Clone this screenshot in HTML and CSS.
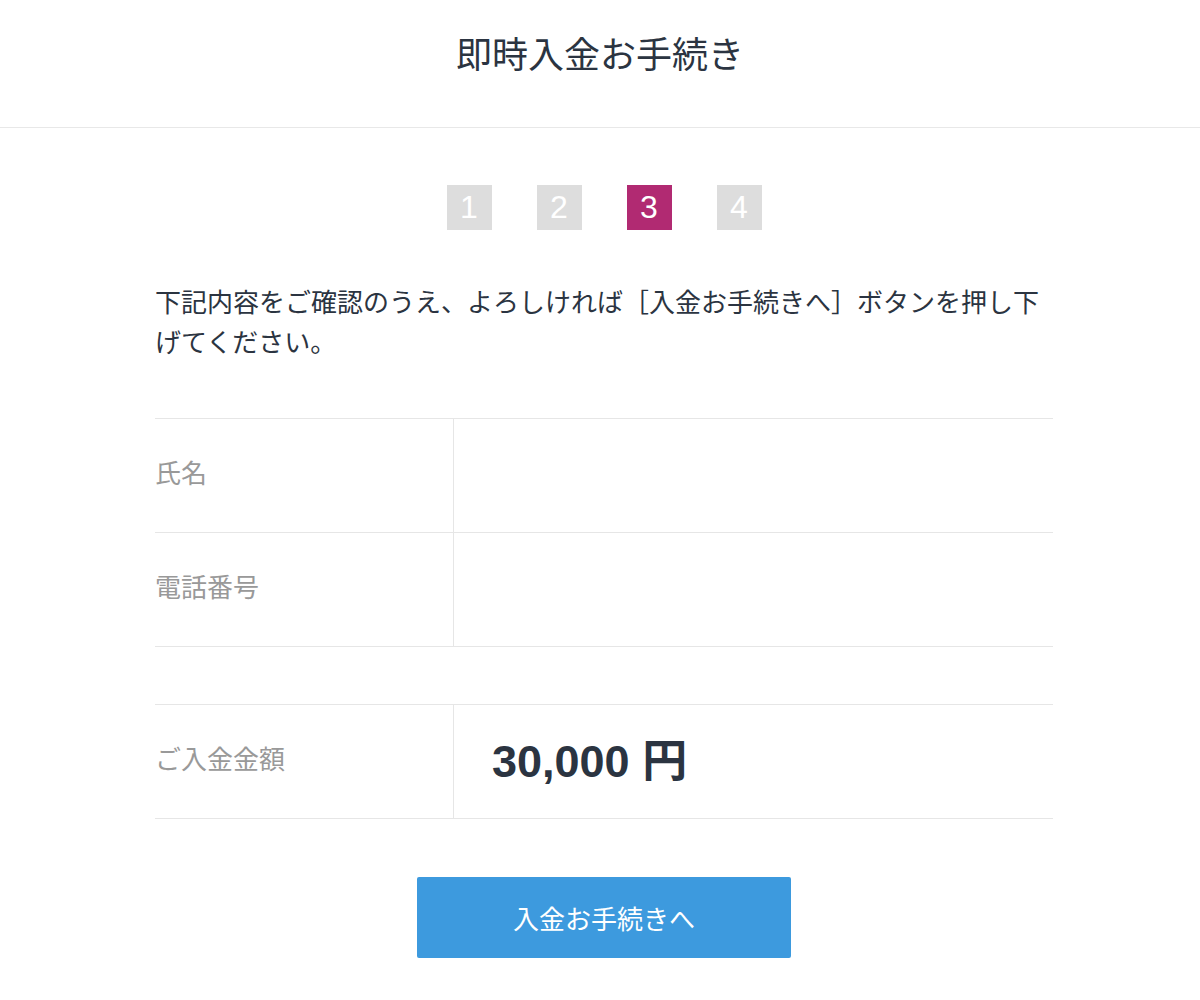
FILE: index.html
```html
<!DOCTYPE html>
<html lang="ja">
<head>
    <meta charset="UTF-8">
    <meta name="viewport" content="width=device-width, initial-scale=1.0">
    <title>即時入金お手続き</title>
    <link rel="stylesheet" href="styles.css">
</head>
<body>

    <header class="page-header">
        <h1>即時入金お手続き</h1>
    </header>

    <main class="wrap">
        <div class="container">
            <ol class="steps">
                <li class="step">1</li>
                <li class="step">2</li>
                <li class="step active">3</li>
                <li class="step">4</li>
            </ol>

            <p class="lead">下記内容をご確認のうえ、よろしければ［入金お手続きへ］ボタンを押し下げてください。</p>

            <table class="info">
                <tr>
                    <th>氏名</th>
                    <td></td>
                </tr>
                <tr>
                    <th>電話番号</th>
                    <td></td>
                </tr>
            </table>

            <table class="info amount-table">
                <tr>
                    <th>ご入金金額</th>
                    <td><span class="amount">30,000 円</span></td>
                </tr>
            </table>

            <div class="actions">
                <button type="button" class="submit">入金お手続きへ</button>
            </div>
        </div>
    </main>

</body>
</html>
```

FILE: styles.css
```css
body {
    margin: 0;
    font-family: "Noto Sans CJK JP", "Noto Sans", sans-serif;
    color: #2b3441;
    background-color: #fff;
}

.page-header {
    padding: 28px 0 51px;
    border-bottom: 1px solid #e8e8e8;
    text-align: center;
}

.page-header h1 {
    margin: 0;
    font-size: 36px;
    line-height: 48px;
    font-weight: 400;
    color: #2b3441;
}

.wrap {
    padding-left: 8px;
}

.container {
    width: 898px;
    margin: 0 auto;
}

.steps {
    display: flex;
    justify-content: center;
    gap: 45px;
    list-style: none;
    margin: 57px 0 0;
    padding: 0;
}

.step {
    width: 45px;
    height: 45px;
    background-color: #dddddd;
    color: #fff;
    font-family: "Liberation Sans", Arial, sans-serif;
    font-size: 32px;
    line-height: 45px;
    text-align: center;
}

.step.active {
    background-color: #b12a72;
}

.lead {
    margin: 51px 0 0;
    font-size: 26px;
    line-height: 40px;
}

.info {
    width: 100%;
    border-collapse: collapse;
    margin-top: 57px;
}

.info th,
.info td {
    height: 105px;
    border-top: 1px solid #e6e6e6;
    border-bottom: 1px solid #e6e6e6;
    padding: 0 0 8px;
    vertical-align: middle;
}

.info th {
    width: 298px;
    border-right: 1px solid #e6e6e6;
    text-align: left;
    font-size: 26px;
    font-weight: 400;
    color: #999;
}

.info td {
    padding-left: 38px;
}

.amount-table {
    margin-top: 57px;
}

.amount {
    font-family: "Liberation Sans", Arial, "Noto Sans CJK JP", sans-serif;
    font-size: 45px;
    font-weight: 700;
    color: #2b3441;
}

.actions {
    display: flex;
    justify-content: center;
    margin-top: 58px;
}

.submit {
    width: 374px;
    height: 81px;
    border: none;
    border-radius: 2px;
    background-color: #3d9ade;
    color: #fff;
    font-family: "Noto Sans CJK JP", sans-serif;
    font-size: 26px;
    cursor: pointer;
}
```
